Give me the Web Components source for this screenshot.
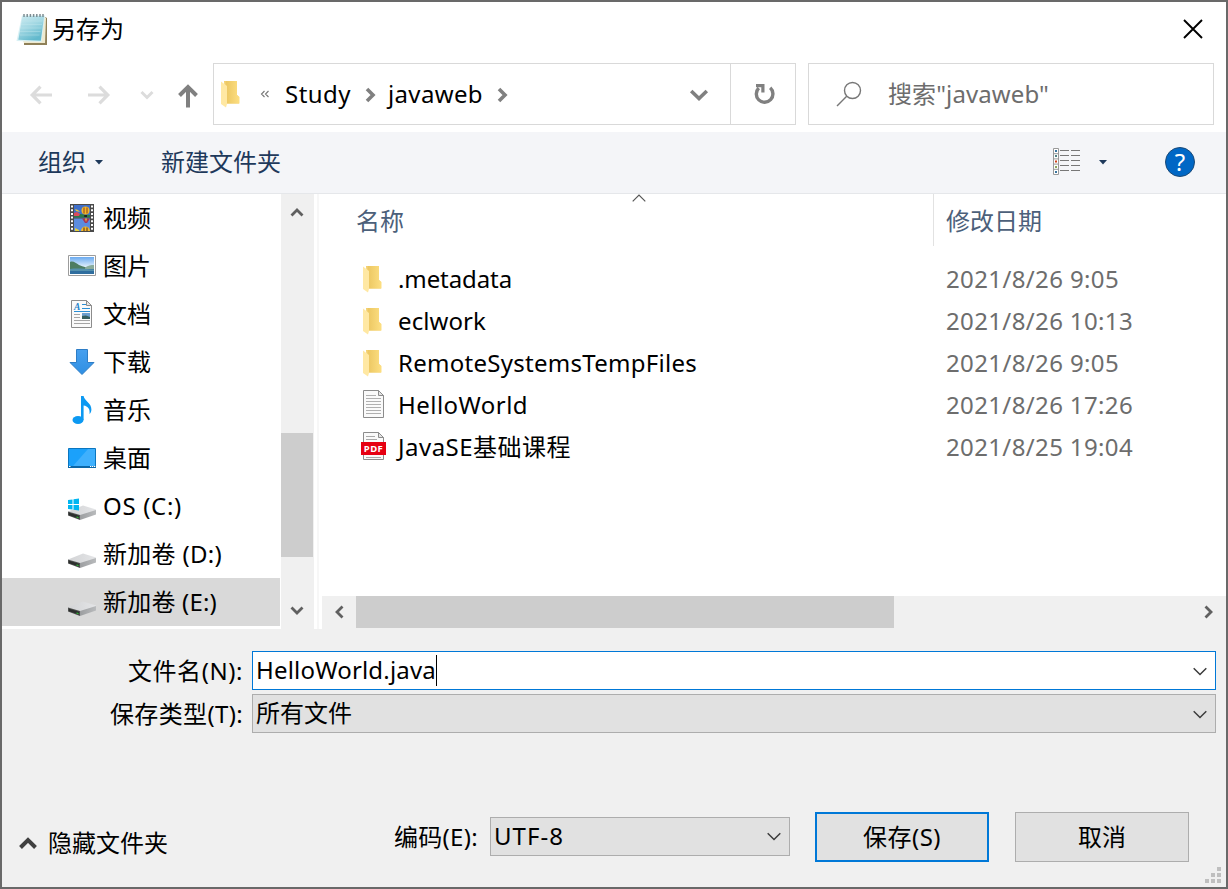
<!DOCTYPE html>
<html lang="zh-CN">
<head>
<meta charset="utf-8">
<title>另存为</title>
<style>
    html, body {
        margin: 0;
        height: 100%;
        overflow: hidden;
        background: #696969;
    }
    body {
        font: 24px/32px "Noto Sans", "Noto Sans CJK SC", sans-serif;
        color: #000;
    }
</style>
</head>
<body>
<save-dialog></save-dialog>

<script>
// Every icon is [width, height, markup]; drawn at its natural size.
const folder = `
    <path d="M6 2h13v14l2 2v6.500H8z" fill="#f3cf6e"/>
    <path d="M8 2h11v14l2.500 2v6.500H9z" fill="url(#fg)"/>
    <path d="M3 2.500l6 4.500v18L8 28.500l-5-3.500z" fill="#ffe8a3"/>
    <defs><linearGradient id="fg" x1="0" x2="1"><stop offset="0" stop-color="#ecc762"/><stop offset="1" stop-color="#fddf82"/></linearGradient></defs>`;

const drive = `
    <defs>
        <linearGradient id="dt" x1="0" x2="1"><stop offset="0" stop-color="#d2d3d5"/><stop offset="1" stop-color="#e4e5e7"/></linearGradient>
        <linearGradient id="ds" x1="0" x2="1"><stop offset="0" stop-color="#9c9ea0"/><stop offset="1" stop-color="#b9bbbd"/></linearGradient>
    </defs>
    <path d="M0 19.500L15 13.500l13 4v1.500L12 23.500z" fill="url(#dt)"/>
    <path d="M12 23L28 18v4.500L12 28z" fill="url(#ds)"/>
    <path d="M0 19.500l12 3.500v5L0 23.500z" fill="#4d4f4e"/>
    <path d="M1 20.800l10 3v2.700L1 23.200z" fill="#2c2e2d"/>
    <path d="M8.500 24.500l2 .6v1l-2-.6z" fill="#2fd336"/>`;

const sheet = `
    <path d="M3.500.500h15l5 5v22h-20z" fill="#fafafa" stroke="#8c8c8c"/>
    <path d="M18.500.500v5h5z" fill="#e4e4e4" stroke="#8c8c8c"/>`;

const icons = {
    notepad: [32, 33, `
        <defs><linearGradient id="np" x1="0" y1="0" x2=".5" y2="1"><stop offset="0" stop-color="#cfecf2"/><stop offset=".5" stop-color="#a3d8e3"/><stop offset="1" stop-color="#62b9cd"/></linearGradient></defs>
        <path d="M8 30l21-26 2 1v27H8z" fill="#8f8058"/>
        <path d="M7 28l21.500-24 1.500 1-1 25H8z" fill="#eee9cf"/>
        <path d="M6 2.500h23l-3.500 26.500L.5 28z" fill="#d9f1f5"/>
        <path d="M6.500 3h21.700L24.800 27.800 2.300 26.800z" fill="url(#np)"/>
        <path d="M5.500 8h21M5 11.500h21M4.500 15h21M4 18.500h20.500M3.500 22h20" stroke="#c4e8ee" stroke-width=".8" opacity=".5"/>
        <path d="M8 4V1M11.200 4V1M14.400 4V1M17.600 4V1M20.800 4V1M24 4V1M27 4V1" stroke="#7d8d92" stroke-width="1.500"/>`],
    close: [20, 20, `<path d="M1 1l18 18M19 1L1 19" stroke="#000" stroke-width="1.900"/>`],
    back: [22, 20, `<path d="M10.500 1.700L2.200 10l8.300 8.300M2 10h20" stroke="#dcdcdc" stroke-width="3.200" fill="none"/>`],
    forward: [22, 20, `<path d="M11.500 1.700l8.300 8.300-8.300 8.300M20 10H0" stroke="#dcdcdc" stroke-width="3.200" fill="none"/>`],
    recent: [14, 10, `<path d="M1.500 2L7 7.500 12.500 2" stroke="#dcdcdc" stroke-width="3" fill="none"/>`],
    up: [20, 24, `<path d="M1.500 11.500L10 3l8.500 8.500M10 3v20.500" stroke="#808080" stroke-width="4" fill="none"/>`],
    folder: [28, 28, folder],
    more: [10, 8, `<path d="M4.500 1L1.500 4l3 3M8.500 1l-3 3 3 3" stroke="#777" stroke-width="1.100" fill="none"/>`],
    crumb: [12, 16, `<path d="M2 2l6 6-6 6" stroke="#808080" stroke-width="3.600" fill="none"/>`],
    drop: [20, 14, `<path d="M2.200 3L10 10.500 17.800 3" stroke="#808080" stroke-width="3.600" fill="none"/>`],
    refresh: [24, 24, `
        <path d="M18.200 5.800A8.300 8.300 0 1 1 6.800 6" stroke="#808080" stroke-width="3.400" fill="none"/>
        <path d="M4 2h8.500v8.500H9.300V5.200H4z" fill="#808080"/>`],
    search: [26, 26, `<circle cx="16.500" cy="9.500" r="8" stroke="#777" stroke-width="1.400" fill="none"/><path d="M10.700 15.300L1 25" stroke="#777" stroke-width="1.400"/>`],
    triangle: [8, 5, `<path d="M0 0h8L4 4.500z" fill="#1e395b"/>`],
    view: [28, 27, `
        <path d="M.5.500h5v26h-5zM.5 5.700h5M.5 10.900h5M.5 16.100h5M.5 21.300h5" stroke="#999" fill="#fff"/>
        <path d="M2 2h2v2H2z" fill="#39759f"/><path d="M2 7h2v2H2z" fill="#4f8285"/><path d="M2 12.500h2v2H2z" fill="#d0421b"/><path d="M2 18h2v2H2z" fill="#8ba65b"/><path d="M2 23h2v2H2z" fill="#39759f"/>
        <path d="M7 2.500h9M18 2.500h9M7 7.500h9M18 7.500h9M7 12.500h9M18 12.500h9M7 17.500h9M18 17.500h9M7 22.500h9M18 22.500h9" stroke="#777"/>`],
    help: [30, 30, `
        <circle cx="15" cy="15" r="14.500" fill="#0067c5" stroke="#1b4a78"/>
        <text x="15" y="23.500" text-anchor="middle" font-size="24" font-family="Noto Sans" fill="#fff">?</text>`],
    video: [28, 28, `
        <path d="M2 0h24v28H2z" fill="#4a4a4a"/>
        <path d="M6 1h16v12.500H6z" fill="#3f6fca"/><path d="M6 14.500h16V27H6z" fill="#5b8ce0"/>
        <path d="M6 10.500l6-.5 10 1v2.500H6z" fill="#2c7a45"/><path d="M6 9l3-1 3 2-1 2H6z" fill="#db4b5c"/>
        <path d="M7 5l3 1 2 2-4-1z" fill="#e8c53a"/>
        <circle cx="17.500" cy="6.500" r="4" fill="#f4b92a"/><path d="M16 3.500v6M19 3.500v6" stroke="#8a3d20" stroke-width="1"/><path d="M16.200 11h2.800v2h-2.800z" fill="#222"/>
        <path d="M14 14.500h8L19 19h-2z" fill="#a63459"/><path d="M17 14.500h2L18 18z" fill="#eabf34"/>
        <path d="M13 27a4.500 4.500 0 0 1 9 0z" fill="#f4b92a"/><path d="M16 23.500V27M19 23.500V27" stroke="#4f2c20"/><path d="M7 24l4 2v1H7z" fill="#e8d23a"/>
        <path d="M4 1.500v26M24 1.500v26" stroke="#fff" stroke-width="2" stroke-dasharray="2 1.700"/>`],
    picture: [28, 28, `
        <defs><linearGradient id="sk" x2="0" y2="1"><stop offset="0" stop-color="#6aaaf0"/><stop offset="1" stop-color="#eef7fd"/></linearGradient></defs>
        <path d="M.5 3.500h27v20H.500z" fill="#fff" stroke="#9c9c9c"/>
        <path d="M2 5h24v11H2z" fill="url(#sk)"/>
        <path d="M2 10c3-1.500 6 1 9 3 4 2 9 3 15 3v1H2z" fill="#4d7d62"/>
        <path d="M17 15.500c3-2 6-2.500 9-2.500v4h-9z" fill="#8aac9c"/>
        <path d="M2 17h24v5H2z" fill="#2f6d9e"/><path d="M2 17c8-1 14 0 24 .5v1.500H2z" fill="#5591ad"/>`],
    document: [28, 28, sheet + `
        <text x="6" y="9.500" font-size="9.500" font-weight="700" font-style="italic" font-family="Liberation Serif" fill="#1d83c9">A</text>
        <path d="M14 4.500h4M14 8.500h8M6 11.500h16" stroke="#2a8fd6" stroke-width="1.200"/>
        <path d="M6 14.500h6M6 17.500h6M6 20.500h16M6 23.500h16" stroke="#a5a5a5"/>
        <path d="M14 13h8v6h-8z" fill="#6c9fcf"/><path d="M14 16l4-.5 4 1.500v2h-8z" fill="#345f60"/>`],
    download: [28, 28, `
        <defs><linearGradient id="dl" x2="0" y2="1"><stop offset="0" stop-color="#47a0ef"/><stop offset="1" stop-color="#2f8fe3"/></linearGradient></defs>
        <path d="M8.500 1.500h11v13h6.500L14 26.500 2 14.500h6.500z" fill="url(#dl)" stroke="#2d7dc6"/>`],
    music: [28, 28, `
        <ellipse cx="10" cy="24" rx="5.500" ry="4" fill="#0c99f2"/>
        <path d="M13 0h2.600c.8 5 8 7 7.800 13.500 0 2-.8 3.500-1.900 4.500.8-5-1.500-8-5.900-8.600V24H13z" fill="#0c99f2"/>`],
    desktop: [28, 28, `
        <path d="M.5 4.500h27v19H.500z" fill="#1ba1fb" stroke="#0b76bf"/>
        <path d="M5 22L20 5h7v17z" fill="#3fb0fd"/>
        <path d="M0 22h28v2H0z" fill="#0b67a8"/><path d="M1 22h1.500v1H1zM22 22h1.300v1H22zM24 22h1.300v1H24zM26 22h1.300v1H26z" fill="#fff"/>`],
    drive: [28, 28, drive],
    system: [28, 28, drive + `<path d="M0 8l4.500-.6V12H0zM5.500 7.200L11 6.500V12H5.500zM0 13h4.500v4.600L0 17zM5.500 13H11v5.500l-5.500-.7z" fill="#00b6f1"/>`],
    text: [28, 28, sheet + `<path d="M6 5.500h10M6 8.500h15M6 11.500h15M6 14.500h15M6 17.500h15M6 20.500h15M6 23.500h15" stroke="#b0b0b0"/>`],
    pdf: [28, 28, sheet + `
        <path d="M6 4.500h9M6 7.500h11M6 25.500h15" stroke="#a9a9a9"/>
        <path d="M1 10h25v13H1z" fill="#e60012"/>
        <text x="13.500" y="20.200" text-anchor="middle" font-size="9.500" letter-spacing=".4" font-weight="700" font-family="Noto Sans" fill="#fff">PDF</text>`],
    scroll: [14, 10, `<path d="M1.500 8.500L7 3l5.500 5.500" stroke="#606060" stroke-width="2.800" fill="none"/>`],
    sort: [14, 8, `<path d="M.7 7.300L7 1l6.300 6.300" stroke="#555" stroke-width="1.200" fill="none"/>`],
    combo: [14, 9, `<path d="M.7 1.200L7 7.500l6.300-6.300" stroke="#3c3c3c" stroke-width="1.500" fill="none"/>`],
    collapse: [18, 12, `<path d="M1.500 10.500L9 3l7.500 7.500" stroke="#404040" stroke-width="4" fill="none"/>`],
    grip: [16, 16, `<path d="M12 0h4v4h-4zM6 6h4v4H6zM12 6h4v4h-4zM0 12h4v4H0zM6 12h4v4H6zM12 12h4v4h-4z" fill="#bfbfbf"/>`],
};

class WinIcon extends HTMLElement {

    connectedCallback() {
        const [w, h, body] = icons[this.getAttribute('name')];
        this.attachShadow({ mode: 'open' }).innerHTML = `
            <style>
                :host { display: block; flex: none; line-height: 0; }
                svg { display: block; overflow: visible; }
            </style>
            <svg width="${w}" height="${h}" viewBox="0 0 ${w} ${h}">${body}</svg>`;
    }
}

// Spreads or tightens its letters so that the line is `width` pixels wide.
class FitText extends HTMLElement {

    connectedCallback() {
        this.attachShadow({ mode: 'open' }).innerHTML = `
            <style>
                :host { display: inline-block; flex: none; white-space: nowrap; vertical-align: top; }
            </style>
            <slot></slot>`;
        requestAnimationFrame(() => this.fit());
        this.fit();
    }

    fit() {
        const width = parseFloat(this.getAttribute('width'));
        this.style.width = '';
        this.style.letterSpacing = '0px';
        const natural = this.getBoundingClientRect().width;
        if (!width || !natural)
            return;
        this.style.letterSpacing = (width - natural) / this.textContent.length + 'px';
        this.style.width = width + 'px';
    }
}

class AddressBar extends HTMLElement {

    connectedCallback() {
        this.attachShadow({ mode: 'open' }).innerHTML = `
            <style>
                :host { display: flex; flex: none; align-items: center; height: 62px; padding: 0 12px 0 28px; }
                .arrows { display: flex; align-items: center; width: 183px; margin-top: 2px; }
                .path, .search { display: flex; align-items: center; box-sizing: border-box; height: 62px; border: 1px solid #d9d9d9; background: #fff; }
                .path { width: 583px; margin-right: 12px; }
                .search { width: 406px; padding-left: 28px; color: #6d6d6d; }
                .refresh { display: flex; align-items: center; justify-content: center; width: 64px; height: 60px; border-left: 1px solid #d9d9d9; }
                .fill { flex: 1; }
            </style>
            <div class="arrows">
                <win-icon name="back"></win-icon>
                <win-icon name="forward" style="margin-left:36px"></win-icon>
                <win-icon name="recent" style="margin-left:30px"></win-icon>
                <win-icon name="up" style="margin:2px 0 0 24px"></win-icon>
            </div>
            <div class="path">
                <win-icon name="folder" style="margin:-2px 0 0 4px"></win-icon>
                <win-icon name="more" style="margin-left:14px"></win-icon>
                <fit-text width="66" style="margin-left:15px">Study</fit-text>
                <win-icon name="crumb" style="margin:2px 0 0 14px"></win-icon>
                <fit-text width="95" style="margin-left:11px">javaweb</fit-text>
                <win-icon name="crumb" style="margin:2px 0 0 14px"></win-icon>
                <span class="fill"></span>
                <win-icon name="drop" style="margin:2px 21px 0 0"></win-icon>
                <div class="refresh"><win-icon name="refresh" style="margin-left:1px"></win-icon></div>
            </div>
            <div class="search">
                <win-icon name="search" style="margin-left:-1px"></win-icon>
                <fit-text width="161" style="margin-left:26px">搜索"javaweb"</fit-text>
            </div>`;
    }
}

class ToolBar extends HTMLElement {

    connectedCallback() {
        this.attachShadow({ mode: 'open' }).innerHTML = `
            <style>
                :host { display: flex; flex: none; align-items: center; box-sizing: border-box; height: 62px; margin-top: 7px; padding: 0 31px 2px 36px; background: #f4f5f8; border-bottom: 1px solid #e5e7ea; color: #1e395b; }
                .fill { flex: 1; }
            </style>
            <span>组织</span>
            <win-icon name="triangle" style="margin:1px 0 0 9px"></win-icon>
            <span style="margin-left:58px">新建文件夹</span>
            <span class="fill"></span>
            <win-icon name="view"></win-icon>
            <win-icon name="triangle" style="margin:1px 58px 0 18px"></win-icon>
            <win-icon name="help"></win-icon>`;
    }
}

class TreeItem extends HTMLElement {

    connectedCallback() {
        this.attachShadow({ mode: 'open' }).innerHTML = `
            <style>
                :host { display: flex; align-items: center; gap: 7px; height: 48px; padding-left: 66px; }
                :host([selected]) { background: #d9d9d9; }
            </style>
            <win-icon name="${this.getAttribute('icon')}"></win-icon>
            <slot></slot>`;
    }
}

class FileRow extends HTMLElement {

    connectedCallback() {
        this.attachShadow({ mode: 'open' }).innerHTML = `
            <style>
                :host { display: flex; align-items: center; height: 42px; padding-left: 39px; }
                win-icon { margin: -2px 10px 0 0; }
                .name { width: 548px; }
                .date { color: #6d6d6d; }
            </style>
            <win-icon name="${this.getAttribute('icon')}" style="margin-left:2px"></win-icon>
            <span class="name"><slot></slot></span>
            <span class="date"><slot name="date"></slot></span>`;
    }
}

// Arrow, track and thumb; `start` and `size` place the thumb on the track.
class ScrollBar extends HTMLElement {

    connectedCallback() {
        const across = this.hasAttribute('horizontal');
        const start = this.getAttribute('start');
        const size = this.getAttribute('size');
        this.attachShadow({ mode: 'open' }).innerHTML = `
            <style>
                :host { display: flex; flex: none; flex-direction: ${across ? 'row' : 'column'}; background: #f0f0f0; ${across ? 'height: 33px' : 'width: 33px'}; }
                .end { display: flex; align-items: center; justify-content: center; ${across ? 'width: 34px; height: 32px' : 'width: 32px; height: 36px'}; }
                .track { flex: 1; }
                .thumb { background: #cdcdcd; ${across ? `margin-left: ${start}px; width: ${size}px; height: 32px` : `margin-top: ${start}px; height: ${size}px; width: 32px`}; }
            </style>
            <div class="end"><win-icon name="scroll" style="transform:rotate(${across ? -90 : 0}deg)"></win-icon></div>
            <div class="track"><div class="thumb"></div></div>
            <div class="end"><win-icon name="scroll" style="transform:rotate(${across ? 90 : 180}deg)"></win-icon></div>`;
    }
}

class FileList extends HTMLElement {

    connectedCallback() {
        this.attachShadow({ mode: 'open' }).innerHTML = `
            <style>
                :host { display: flex; flex-direction: column; flex: 1; box-sizing: border-box; border-left: 2px solid #f7f7f7; background: #fff; }
                .head { display: flex; height: 52px; margin-bottom: 12px; line-height: 53px; color: #4c607a; }
                .name { display: flex; width: 577px; padding-left: 37px; border-right: 1px solid #e2e2e2; }
                .date { padding-left: 12px; }
                .rows { flex: 1; }
                scroll-bar { margin-left: 3px; }
            </style>
            <div class="head">
                <div class="name">名称<win-icon name="sort" style="margin:0 0 0 228px"></win-icon></div>
                <div class="date">修改日期</div>
            </div>
            <div class="rows"><slot></slot></div>
            <scroll-bar horizontal start="0" size="538"></scroll-bar>`;
    }
}

class ComboBox extends HTMLElement {

    connectedCallback() {
        this.attachShadow({ mode: 'open' }).innerHTML = `
            <style>
                :host { display: flex; align-items: center; box-sizing: border-box; height: 39px; padding: 0 8px 1px 3px; border: 1px solid #adadad; background: #e1e1e1; }
                :host([active]) { background: #fff; border-color: #0078d7; }
                .caret { width: 1px; height: 31px; background: #000; display: none; }
                :host([active]) .caret { display: block; }
                .fill { flex: 1; }
                win-icon { margin-top: 2px; }
            </style>
            <slot></slot><span class="caret"></span><span class="fill"></span>
            <win-icon name="combo"></win-icon>`;
    }
}

class PushButton extends HTMLElement {

    connectedCallback() {
        this.attachShadow({ mode: 'open' }).innerHTML = `
            <style>
                :host { display: flex; flex: none; align-items: center; justify-content: center; box-sizing: border-box; width: 174px; height: 50px; border: 1px solid #adadad; background: #e1e1e1; }
                :host([default]) { border: 2px solid #0078d7; }
            </style>
            <slot></slot>`;
    }
}

class SaveDialog extends HTMLElement {

    connectedCallback() {
        this.attachShadow({ mode: 'open' }).innerHTML = `
            <style>
                :host { display: flex; flex-direction: column; box-sizing: border-box; width: 1228px; height: 889px; border: 2px solid #696969; background: #fff; }
                .title { display: flex; flex: none; align-items: center; height: 54px; margin-bottom: 7px; padding: 0 23px 0 14px; }
                .title span { flex: 1; margin-left: 4px; }
                .body { display: flex; flex: none; height: 435px; }
                .tree { width: 278px; margin-right: 1px; }
                .split { width: 3px; }
                .foot { flex: 1; display: flex; flex-direction: column; background: #f0f0f0; }
                .field { display: flex; align-items: center; margin-bottom: 4px; height: 39px; }
                .label { width: 241px; margin-right: 9px; text-align: right; }
                .field combo-box { width: 964px; }
                .actions { display: flex; align-items: center; height: 50px; margin-top: 75px; padding-left: 17px; }
                .size { display: flex; justify-content: flex-end; padding-right: 5px; margin-top: 5px; }
            </style>
            <div class="title">
                <win-icon name="notepad"></win-icon>
                <span>另存为</span>
                <win-icon name="close"></win-icon>
            </div>
            <address-bar></address-bar>
            <tool-bar></tool-bar>
            <div class="body">
                <div class="tree">
                    <tree-item icon="video">视频</tree-item>
                    <tree-item icon="picture">图片</tree-item>
                    <tree-item icon="document">文档</tree-item>
                    <tree-item icon="download">下载</tree-item>
                    <tree-item icon="music">音乐</tree-item>
                    <tree-item icon="desktop">桌面</tree-item>
                    <tree-item icon="system"><fit-text width="79">OS (C:)</fit-text></tree-item>
                    <tree-item icon="drive"><fit-text width="119">新加卷 (D:)</fit-text></tree-item>
                    <tree-item icon="drive" selected><fit-text width="114">新加卷 (E:)</fit-text></tree-item>
                </div>
                <scroll-bar start="203" size="124"></scroll-bar>
                <div class="split"></div>
                <file-list>
                    <file-row icon="folder"><fit-text width="114">.metadata</fit-text><fit-text slot="date" width="173">2021/8/26 9:05</fit-text></file-row>
                    <file-row icon="folder"><fit-text width="88">eclwork</fit-text><fit-text slot="date" width="187">2021/8/26 10:13</fit-text></file-row>
                    <file-row icon="folder"><fit-text width="299">RemoteSystemsTempFiles</fit-text><fit-text slot="date" width="173">2021/8/26 9:05</fit-text></file-row>
                    <file-row icon="text"><fit-text width="130">HelloWorld</fit-text><fit-text slot="date" width="187">2021/8/26 17:26</fit-text></file-row>
                    <file-row icon="pdf"><fit-text width="173">JavaSE基础课程</fit-text><fit-text slot="date" width="187">2021/8/25 19:04</fit-text></file-row>
                </file-list>
            </div>
            <div class="foot">
                <div class="field" style="margin-top:22px">
                    <div class="label"><fit-text width="115">文件名(N):</fit-text></div>
                    <combo-box active><fit-text width="180">HelloWorld.java</fit-text></combo-box>
                </div>
                <div class="field">
                    <div class="label"><fit-text width="133">保存类型(T):</fit-text></div>
                    <combo-box>所有文件</combo-box>
                </div>
                <div class="actions">
                    <win-icon name="collapse" style="margin-top:12px"></win-icon>
                    <span style="margin:11px 226px 0 11px">隐藏文件夹</span>
                    <fit-text width="84">编码(E):</fit-text>
                    <combo-box style="width:300px;margin:0 25px 2px 12px"><fit-text width="70">UTF-8</fit-text></combo-box>
                    <push-button default><fit-text width="78">保存(S)</fit-text></push-button>
                    <push-button style="margin-left:26px">取消</push-button>
                </div>
                <div class="size"><win-icon name="grip"></win-icon></div>
            </div>`;
    }
}

customElements.define('win-icon', WinIcon);
customElements.define('fit-text', FitText);
customElements.define('address-bar', AddressBar);
customElements.define('tool-bar', ToolBar);
customElements.define('tree-item', TreeItem);
customElements.define('file-row', FileRow);
customElements.define('scroll-bar', ScrollBar);
customElements.define('file-list', FileList);
customElements.define('combo-box', ComboBox);
customElements.define('push-button', PushButton);
customElements.define('save-dialog', SaveDialog);
</script>
</body>
</html>
